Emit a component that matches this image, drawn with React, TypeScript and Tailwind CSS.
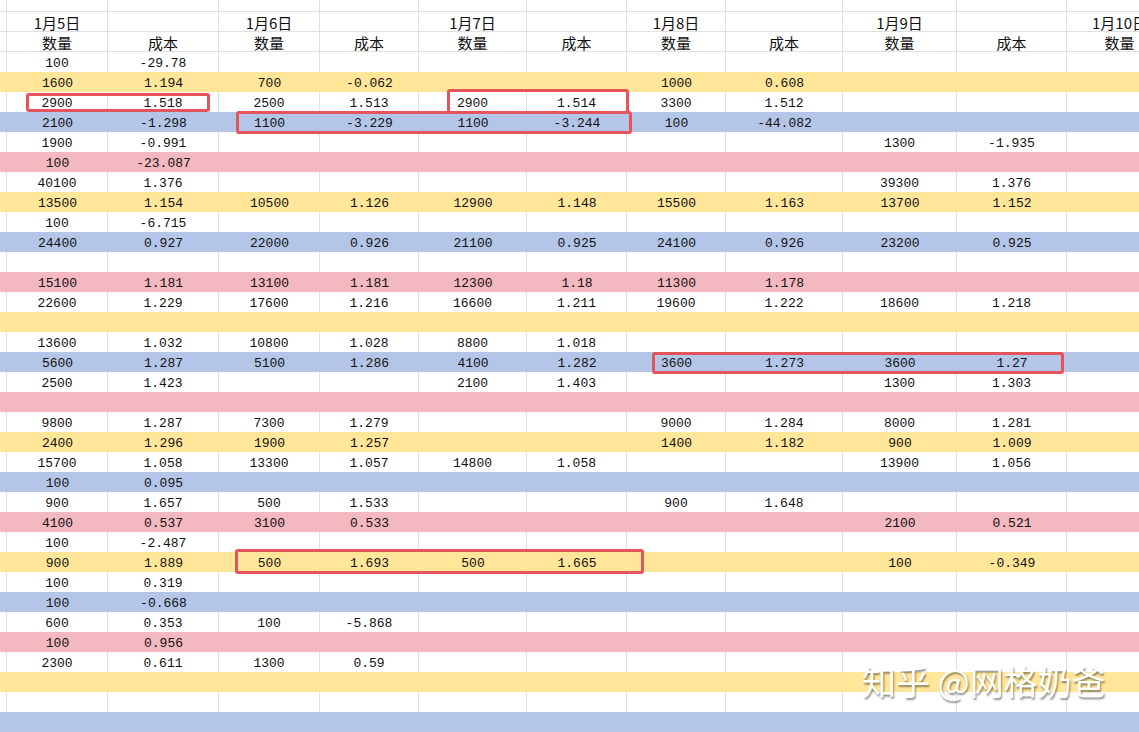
const Y = 'bg-[#ffe699]'
const B = 'bg-[#b4c6e7]'
const P = 'bg-[#f4b8c0]'
const W = ''

type Row = { bg: string; v: string[] }

// each row: 数量/成本 pairs for 1月5日 .. 1月9日, then 1月10日 数量
const rows: Row[] = [
  { bg: W, v: ['100', '-29.78'] },
  { bg: Y, v: ['1600', '1.194', '700', '-0.062', '', '', '1000', '0.608'] },
  { bg: W, v: ['2900', '1.518', '2500', '1.513', '2900', '1.514', '3300', '1.512'] },
  { bg: B, v: ['2100', '-1.298', '1100', '-3.229', '1100', '-3.244', '100', '-44.082'] },
  { bg: W, v: ['1900', '-0.991', '', '', '', '', '', '', '1300', '-1.935'] },
  { bg: P, v: ['100', '-23.087'] },
  { bg: W, v: ['40100', '1.376', '', '', '', '', '', '', '39300', '1.376'] },
  { bg: Y, v: ['13500', '1.154', '10500', '1.126', '12900', '1.148', '15500', '1.163', '13700', '1.152'] },
  { bg: W, v: ['100', '-6.715'] },
  { bg: B, v: ['24400', '0.927', '22000', '0.926', '21100', '0.925', '24100', '0.926', '23200', '0.925'] },
  { bg: W, v: [] },
  { bg: P, v: ['15100', '1.181', '13100', '1.181', '12300', '1.18', '11300', '1.178'] },
  { bg: W, v: ['22600', '1.229', '17600', '1.216', '16600', '1.211', '19600', '1.222', '18600', '1.218'] },
  { bg: Y, v: [] },
  { bg: W, v: ['13600', '1.032', '10800', '1.028', '8800', '1.018'] },
  { bg: B, v: ['5600', '1.287', '5100', '1.286', '4100', '1.282', '3600', '1.273', '3600', '1.27'] },
  { bg: W, v: ['2500', '1.423', '', '', '2100', '1.403', '', '', '1300', '1.303'] },
  { bg: P, v: [] },
  { bg: W, v: ['9800', '1.287', '7300', '1.279', '', '', '9000', '1.284', '8000', '1.281'] },
  { bg: Y, v: ['2400', '1.296', '1900', '1.257', '', '', '1400', '1.182', '900', '1.009'] },
  { bg: W, v: ['15700', '1.058', '13300', '1.057', '14800', '1.058', '', '', '13900', '1.056'] },
  { bg: B, v: ['100', '0.095'] },
  { bg: W, v: ['900', '1.657', '500', '1.533', '', '', '900', '1.648'] },
  { bg: P, v: ['4100', '0.537', '3100', '0.533', '', '', '', '', '2100', '0.521'] },
  { bg: W, v: ['100', '-2.487'] },
  { bg: Y, v: ['900', '1.889', '500', '1.693', '500', '1.665', '', '', '100', '-0.349'] },
  { bg: W, v: ['100', '0.319'] },
  { bg: B, v: ['100', '-0.668'] },
  { bg: W, v: ['600', '0.353', '100', '-5.868'] },
  { bg: P, v: ['100', '0.956'] },
  { bg: W, v: ['2300', '0.611', '1300', '0.59'] },
  { bg: Y, v: [] },
  { bg: W, v: [] },
  { bg: B, v: [] },
]

const gridCols =
  'grid grid-cols-[7px_101px_111px_101px_99px_108px_100px_99px_117px_114px_110px_106px]'

const dates = ['1月5日', '1月6日', '1月7日', '1月8日', '1月9日', '1月10日']

function Cell({ text, line, head }: { text?: string; line: boolean; head?: boolean }) {
  return (
    <div
      className={`flex h-full items-center justify-center pt-[2px] leading-none whitespace-nowrap ${
        line ? 'border-r border-[#e0e0e0]' : ''
      } ${head ? 'text-[15px] font-["Noto_Sans_CJK_SC",sans-serif]' : ''}`}
    >
      {text}
    </div>
  )
}

function HeaderRow({ cells, h }: { cells: string[]; h: string }) {
  return (
    <div className={`${gridCols} ${h} border-b border-[#e0e0e0]`}>
      {Array.from({ length: 12 }).map((_, i) => (
        <Cell key={i} text={cells[i]} line head />
      ))}
    </div>
  )
}

export default function App() {
  const dateRow = ['']
  const labelRow = ['']
  dates.forEach((d) => {
    dateRow.push(d, '')
    labelRow.push('数量', '成本')
  })

  return (
    <div className="relative h-[732px] w-[1139px] overflow-hidden bg-white font-['Liberation_Mono','Noto_Sans_CJK_SC',monospace] text-[13px] text-[#111]">
      <HeaderRow cells={[]} h="h-[12px]" />
      <HeaderRow cells={dateRow} h="h-[20px]" />
      <HeaderRow cells={labelRow} h="h-[20px]" />

      {rows.map((r, ri) => (
        <div key={ri} className={`${gridCols} h-[20px] ${r.bg}`}>
          {Array.from({ length: 12 }).map((_, i) => (
            <Cell key={i} text={i === 0 ? '' : r.v[i - 1]} line={r.bg === W} />
          ))}
        </div>
      ))}

      {/* red highlight boxes */}
      <div className="absolute left-[26px] top-[93px] h-[19px] w-[184px] rounded-[3px] border-[3px] border-[#e5535b]" />
      <div className="absolute left-[236px] top-[111px] h-[23px] w-[396px] rounded-[3px] border-[3px] border-[#e5535b]" />
      <div className="absolute left-[447px] top-[89px] h-[25px] w-[182px] rounded-[3px] border-[3px] border-[#e5535b]" />
      <div className="absolute left-[652px] top-[352px] h-[22px] w-[412px] rounded-[3px] border-[3px] border-[#e5535b]" />
      <div className="absolute left-[235px] top-[549px] h-[25px] w-[409px] rounded-[3px] border-[3px] border-[#e5535b]" />

      {/* watermark */}
      <div className="absolute left-[862px] top-[664px] font-['Noto_Sans_CJK_SC',sans-serif] text-[34px] leading-none whitespace-nowrap text-white [text-shadow:1px_2px_2px_rgba(0,0,0,0.45)]">
        知乎 @网格奶爸
      </div>
    </div>
  )
}
